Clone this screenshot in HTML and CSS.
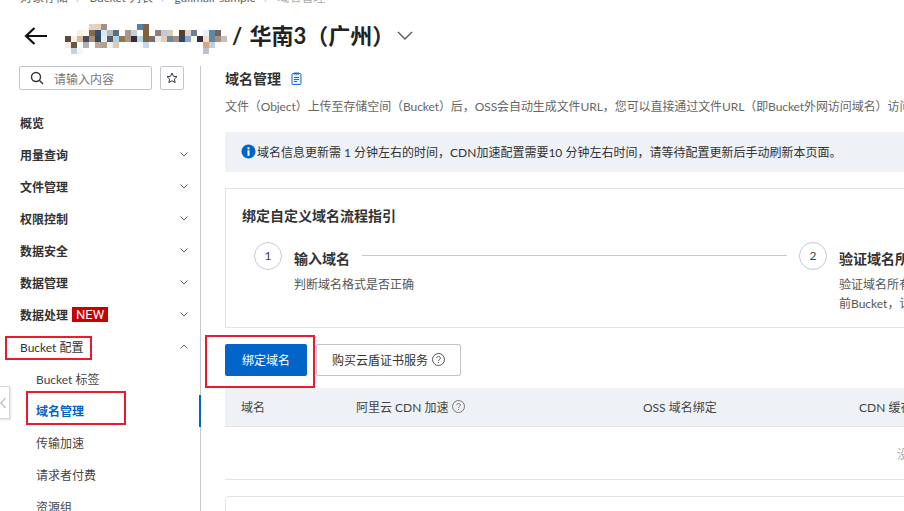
FILE: index.html
```html
<!DOCTYPE html>
<html lang="zh-CN">
<head>
<meta charset="utf-8">
<title>域名管理</title>
<link rel="stylesheet" href="styles.css">
</head>
<body>
<div class="page">
  <nav class="crumbs"><span>对象存储</span><i>/</i><span>Bucket 列表</span><i>/</i><span>gulimall-sample</span><i>/</i><span class="cur">域名管理</span></nav>
  <header class="head">
    <svg class="back" width="24" height="20" viewBox="0 0 24 20"><path d="M23 10H2M10.500 2 2 10l8.500 8" fill="none" stroke="#111" stroke-width="2.200"/></svg>
    <svg class="mosaic" width="162" height="30" viewBox="0 0 162 30" shape-rendering="crispEdges">
      <g id="r0"><rect x="24" width="6" height="6" fill="#e0d4c8"/><rect x="30" width="6" height="6" fill="#e8d0b8"/><rect x="36" width="6" height="6" fill="#a09090"/><rect x="72" width="6" height="6" fill="#5c80a0"/><rect x="78" width="6" height="6" fill="#806040"/></g>
      <g transform="translate(0 6)"><rect x="12" width="6" height="6" fill="#f8f0e0"/><rect x="18" width="6" height="6" fill="#fff8e8"/><rect x="24" width="6" height="6" fill="#8a6848"/><rect x="30" width="6" height="6" fill="#34506c"/><rect x="36" width="6" height="6" fill="#d8e8f0"/><rect x="42" width="6" height="6" fill="#b8b8c0"/><rect x="48" width="6" height="6" fill="#58707c"/><rect x="60" width="6" height="6" fill="#a89888"/><rect x="66" width="6" height="6" fill="#c0d0dc"/><rect x="72" width="6" height="6" fill="#fffbe8"/><rect x="78" width="6" height="6" fill="#806040"/><rect x="90" width="6" height="6" fill="#8c8078"/><rect x="96" width="6" height="6" fill="#c0c8d4"/><rect x="102" width="6" height="6" fill="#d8ccb8"/><rect x="114" width="6" height="6" fill="#584030"/><rect x="120" width="6" height="6" fill="#e0d8d0"/><rect x="126" width="6" height="6" fill="#708090"/><rect x="138" width="6" height="6" fill="#e8f0f8"/><rect x="144" width="6" height="6" fill="#6088a0"/><rect x="150" width="6" height="6" fill="#686868"/></g>
      <g transform="translate(0 12)"><rect width="6" height="6" fill="#5c4a3c"/><rect x="6" width="6" height="6" fill="#f8f0e8"/><rect x="12" width="6" height="6" fill="#d8b898"/><rect x="18" width="6" height="6" fill="#484860"/><rect x="24" width="6" height="6" fill="#a89078"/><rect x="30" width="6" height="6" fill="#304860"/><rect x="36" width="6" height="6" fill="#e0f0f8"/><rect x="42" width="6" height="6" fill="#605868"/><rect x="48" width="6" height="6" fill="#b0d0e8"/><rect x="54" width="6" height="6" fill="#90784c"/><rect x="60" width="6" height="6" fill="#a89888"/><rect x="66" width="6" height="6" fill="#382838"/><rect x="72" width="6" height="6" fill="#b0d8e8"/><rect x="78" width="6" height="6" fill="#806040"/><rect x="84" width="6" height="6" fill="#707070"/><rect x="90" width="6" height="6" fill="#f0e8e0"/><rect x="96" width="6" height="6" fill="#e0ccc0"/><rect x="102" width="6" height="6" fill="#708898"/><rect x="108" width="6" height="6" fill="#a89080"/><rect x="114" width="6" height="6" fill="#344468"/><rect x="120" width="6" height="6" fill="#90a8c8"/><rect x="126" width="6" height="6" fill="#e8ffe8"/><rect x="132" width="6" height="6" fill="#402838"/><rect x="138" width="6" height="6" fill="#f0e0c8"/><rect x="144" width="6" height="6" fill="#6088a0"/><rect x="150" width="6" height="6" fill="#a89078"/><rect x="156" width="6" height="6" fill="#c0c0c0"/></g>
      <g transform="translate(0 18)"><rect width="6" height="6" fill="#f4ece4"/><rect x="6" width="6" height="6" fill="#685840"/><rect x="18" width="6" height="6" fill="#b0b0b0"/><rect x="30" width="6" height="6" fill="#c0a890"/><rect x="36" width="6" height="6" fill="#b0a090"/><rect x="42" width="6" height="6" fill="#f0f0e8"/><rect x="48" width="6" height="6" fill="#d8ccb8"/><rect x="78" width="6" height="6" fill="#c0d8f0"/><rect x="114" width="6" height="6" fill="#f0ffff"/><rect x="138" width="6" height="6" fill="#d0a890"/><rect x="144" width="6" height="6" fill="#c0d0e0"/></g>
      <g transform="translate(0 24)"><rect x="6" width="6" height="6" fill="#c8d0e0"/><rect x="12" width="6" height="6" fill="#f0f8ff"/><rect x="138" width="6" height="6" fill="#c0c0cc"/></g>
    </svg>
    <h1 class="region">/ 华南3（广州）</h1>
    <svg class="caret" width="16" height="9" viewBox="0 0 16 9"><path d="M1 1l7 7 7-7" fill="none" stroke="#555" stroke-width="1.300"/></svg>
  </header>
  <div class="body">
    <aside class="side">
      <div class="searchrow">
        <div class="search">
          <svg width="14" height="14" viewBox="0 0 14 14"><circle cx="6" cy="6" r="4.500" fill="none" stroke="#333" stroke-width="1.400"/><path d="M9.300 9.300 13 13" stroke="#333" stroke-width="1.400"/></svg>
          <span>请输入内容</span>
        </div>
        <button class="star"><svg width="12" height="12" viewBox="0 0 12 12"><path d="M6 1l1.500 3.300 3.500.4-2.600 2.400.7 3.500L6 8.800 2.900 10.600l.7-3.500L1 4.700l3.500-.4z" fill="none" stroke="#333"/></svg></button>
      </div>
      <ul class="nav">
        <li class="item"><span>概览</span></li>
        <li class="item"><span>用量查询</span><svg class="chev" width="8" height="5" viewBox="0 0 8 5"><path d="M.5.500 4 4 7.500.500" fill="none" stroke="#666"/></svg></li>
        <li class="item"><span>文件管理</span><svg class="chev" width="8" height="5" viewBox="0 0 8 5"><path d="M.5.500 4 4 7.500.500" fill="none" stroke="#666"/></svg></li>
        <li class="item"><span>权限控制</span><svg class="chev" width="8" height="5" viewBox="0 0 8 5"><path d="M.5.500 4 4 7.500.500" fill="none" stroke="#666"/></svg></li>
        <li class="item"><span>数据安全</span><svg class="chev" width="8" height="5" viewBox="0 0 8 5"><path d="M.5.500 4 4 7.500.500" fill="none" stroke="#666"/></svg></li>
        <li class="item"><span>数据管理</span><svg class="chev" width="8" height="5" viewBox="0 0 8 5"><path d="M.5.500 4 4 7.500.500" fill="none" stroke="#666"/></svg></li>
        <li class="item"><span>数据处理</span><em class="new">NEW</em><svg class="chev" width="8" height="5" viewBox="0 0 8 5"><path d="M.5.500 4 4 7.500.500" fill="none" stroke="#666"/></svg></li>
        <li class="item plain"><span>Bucket 配置</span><svg class="chev" width="8" height="5" viewBox="0 0 8 5"><path d="M.5 4.500 4 1l3.500 3.500" fill="none" stroke="#666"/></svg></li>
        <li class="sub">Bucket 标签</li>
        <li class="sub active">域名管理</li>
        <li class="sub">传输加速</li>
        <li class="sub">请求者付费</li>
        <li class="sub">资源组</li>
      </ul>
      <div class="handle"><svg width="6" height="12" viewBox="0 0 6 12"><path d="M5.500 1 .8 6l4.700 5" fill="none" stroke="#bbb" stroke-width="1.200"/></svg></div>
      <div class="mark mark-cfg"></div>
      <div class="mark mark-domain"></div>
    </aside>
    <main class="main">
      <div class="title"><h2>域名管理</h2>
        <svg width="11" height="13" viewBox="0 0 11 13"><rect x="1" y="1.500" width="9" height="11" rx="1" fill="#e4eefa" stroke="#1a6fd0"/><rect x="3" y=".5" width="5" height="2" fill="#1a6fd0"/><path d="M3 5.500h5M3 7.500h5M3 9.500h3" stroke="#1a6fd0"/></svg>
      </div>
      <p class="desc">文件（Object）上传至存储空间（Bucket）后，OSS会自动生成文件URL，您可以直接通过文件URL（即Bucket外网访问域名）访问该文件。</p>
      <div class="notice">
        <svg width="15" height="15" viewBox="0 0 15 15"><circle cx="7.500" cy="7.500" r="7" fill="#0064c8"/><rect x="6.500" y="6.300" width="2" height="5.500" fill="#fff"/><rect x="6.500" y="3.300" width="2" height="2" fill="#fff"/></svg>
        <span>域名信息更新需 1 分钟左右的时间，CDN加速配置需要10 分钟左右时间，请等待配置更新后手动刷新本页面。</span>
      </div>
      <section class="guide">
        <h3>绑定自定义域名流程指引</h3>
        <div class="steps">
          <div class="num">1</div>
          <div class="step s1">
            <div class="stephead"><b>输入域名</b><div class="rule"></div></div>
            <p>判断域名格式是否正确</p>
          </div>
          <div class="num">2</div>
          <div class="step s2">
            <div class="stephead"><b>验证域名所有权</b></div>
            <p>验证域名所有权，确保域名绑定到当<br>前Bucket，请按照提示完成验证</p>
          </div>
        </div>
      </section>
      <div class="actions">
        <button class="btn primary">绑定域名</button>
        <button class="btn">购买云盾证书服务<svg class="help" width="13" height="13" viewBox="0 0 13 13"><circle cx="6.500" cy="6.500" r="6" fill="none" stroke="#555"/><path d="M4.700 5.200c0-2.300 3.700-2.300 3.700-.1 0 1.400-1.900 1.400-1.900 2.900" fill="none" stroke="#555"/><rect x="6" y="9" width="1" height="1" fill="#555"/></svg></button>
        <div class="mark mark-bind"></div>
      </div>
      <div class="thead">
        <span>域名</span>
        <span>阿里云 CDN 加速<svg class="help" width="13" height="13" viewBox="0 0 13 13"><circle cx="6.500" cy="6.500" r="6" fill="none" stroke="#777"/><path d="M4.700 5.200c0-2.300 3.700-2.300 3.700-.1 0 1.400-1.900 1.400-1.900 2.900" fill="none" stroke="#777"/><rect x="6" y="9" width="1" height="1" fill="#777"/></svg></span>
        <span>OSS 域名绑定</span>
        <span>CDN 缓存自动刷新</span>
      </div>
      <div class="empty"><span>没有数据</span></div>
      <div class="nextcard"></div>
    </main>
  </div>
</div>
</body>
</html>
```
FILE: styles.css
```css
* { box-sizing: border-box; }
html, body { margin: 0; padding: 0; }
body {
  width: 904px;
  height: 511px;
  overflow: hidden;
  background: #fff;
  color: #333;
  font-family: Lato, "Noto Sans CJK SC", "Liberation Sans", sans-serif;
  font-size: 12px;
}
.page { width: 904px; height: 511px; overflow: hidden; display: flex; flex-direction: column; }
.crumbs {
  display: flex;
  align-items: center;
  height: 16px;
  margin-top: -10px;
  padding-left: 20px;
  color: #666;
  line-height: 16px;
  flex: none;
}
.crumbs i { font-style: normal; color: #bbb; margin: 0 8px; }
.crumbs .cur { color: #aaa; }
.head {
  display: flex;
  align-items: center;
  height: 58px;
  margin-top: 2px;
  padding-left: 24px;
  padding-bottom: 6px;
  flex: none;
}
.back { margin-right: 17px; margin-top: 4px; }
.mosaic { margin-right: 5px; margin-top: 10px; }
.region { margin: 4px 0 0; font-size: 22px; line-height: 30px; font-weight: 700; color: #222; white-space: nowrap; word-spacing: 2px; }
.caret { margin-left: 3px; margin-top: 2px; }
.body { display: flex; flex: 1; min-height: 0; }
.side {
  position: relative;
  width: 201px;
  flex: none;
  border-right: 1px solid #c4c9d0;
  padding-left: 19px;
}
.searchrow { display: flex; gap: 8px; }
.search {
  width: 133px;
  height: 24px;
  border: 1px solid #c0c6cc;
  border-radius: 2px;
  display: flex;
  align-items: center;
  padding-left: 10px;
  gap: 10px;
  color: #777;
}
.star {
  width: 24px;
  height: 24px;
  padding: 0;
  background: #fff;
  border: 1px solid #c0c6cc;
  border-radius: 2px;
  display: flex;
  align-items: center;
  justify-content: center;
}
.nav { list-style: none; margin: 17px 0 0; padding: 0; }
.item {
  height: 32px;
  padding: 0 12px 2px 1px;
  display: flex;
  align-items: center;
  font-weight: 700;
  color: #333;
}
.item.plain { font-weight: 400; }
.chev { margin-left: auto; }
.new {
  font-family: Roboto, sans-serif;
  font-style: normal;
  font-weight: 400;
  margin-left: 4px;
  background: #c80000;
  color: #fff;
  font-size: 13px;
  line-height: 15px;
  height: 15px;
  padding: 0 4px;
}
.sub {
  height: 32px;
  line-height: 34px;
  padding-left: 17px;
  color: #444;
  margin-right: -1px;
}
.sub.active { color: #0064c8; font-weight: 700; border-right: 2px solid #0064c8; }
.handle {
  position: absolute;
  left: -1px;
  top: 320px;
  width: 11px;
  height: 33px;
  background: #fff;
  border: 1px solid #d4d8dc;
  box-shadow: 1px 1px 2px rgba(0,0,0,.12);
  display: flex;
  align-items: center;
}
.mark { position: absolute; border: 2px solid #e81c2c; }
.mark-cfg { left: 5px; top: 270px; width: 87px; height: 24px; }
.mark-domain { left: 26px; top: 325px; width: 100px; height: 34px; }
.main { flex: none; width: 760px; padding: 0 0 0 24px; }
.title { display: flex; align-items: center; gap: 10px; height: 24px; }
.title h2 { margin: 0; font-size: 14px; font-weight: 700; color: #333; }
.desc { margin: 7px 0 0; line-height: 20px; color: #666; white-space: nowrap; letter-spacing: -.08px; }
.notice {
  width: 760px;
  height: 40px;
  margin-top: 15px;
  background: #eef1f6;
  border-radius: 2px;
  display: flex;
  align-items: center;
  gap: 1px;
  padding: 0 0 2px 16px;
  color: #333;
  white-space: nowrap;
}
.guide {
  width: 760px;
  height: 140px;
  margin-top: 16px;
  border: 1px solid #e4e4e4;
  padding: 17px 0 0 16px;
}
.guide h3 { margin: 0; font-size: 14px; line-height: 20px; font-weight: 700; color: #333; }
.steps { display: flex; margin-top: 16px; padding-left: 12px; }
.num {
  width: 28px;
  height: 28px;
  border: 1px solid #c4c9d0;
  border-radius: 50%;
  text-align: center;
  line-height: 26px;
  flex: none;
  color: #444;
}
.step { margin-left: 12px; white-space: nowrap; }
.s1 { width: 493px; flex: none; margin-right: 12px; }
.stephead { display: flex; align-items: center; height: 28px; margin-top: 2px; }
.stephead b { font-size: 14px; font-weight: 700; color: #333; }
.rule { flex: 1; height: 1px; background: #c4c9d0; margin: 0 0 6px 12px; }
.step p { margin: 3px 0 0; line-height: 19px; color: #555; }
.actions { position: relative; display: flex; gap: 9px; margin-top: 16px; height: 44px; }
.btn {
  height: 32px;
  padding: 0 15px 2px;
  border: 1px solid #c0c6cc;
  border-radius: 2px;
  background: #fff;
  color: #333;
  font: inherit;
  display: flex;
  align-items: center;
  white-space: nowrap;
}
.btn.primary { width: 82px; border: 0; background: #0064c8; color: #fff; justify-content: center; padding: 0 0 2px; }
.help { margin-left: 4px; }
.mark-bind { left: -20px; top: -9px; width: 110px; height: 53px; }
.thead {
  width: 760px;
  height: 39px;
  background: #eef1f6;
  border-bottom: 1px solid #e4e4e4;
  display: grid;
  grid-template-columns: 115px 287px 216px 1fr;
  align-items: center;
  padding: 0 0 2px 16px;
  color: #444;
  white-space: nowrap;
}
.thead span { display: flex; align-items: center; }
.empty {
  width: 760px;
  height: 53px;
  border-bottom: 1px solid #e4e4e4;
  display: flex;
  align-items: center;
  padding-left: 672px;
  color: #aaa;
  white-space: nowrap;
}
.nextcard {
  width: 760px;
  height: 40px;
  margin-top: 16px;
  border: 1px solid #e4e4e4;
  border-radius: 4px 0 0 0;
}
```
